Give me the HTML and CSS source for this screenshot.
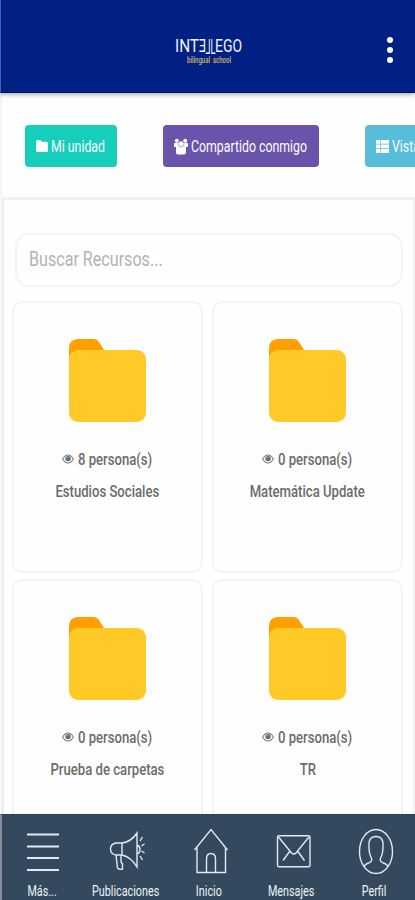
FILE: index.html
```html
<!DOCTYPE html>
<html lang="es">
<head>
<meta charset="utf-8">
<meta name="viewport" content="width=device-width">
<title>Intellego</title>
<link rel="stylesheet" href="styles.css">
</head>
<body>
<svg class="defs" width="0" height="0" aria-hidden="true">
  <symbol id="folder" viewBox="0 0 77 83">
    <path fill="#ffa000" d="M0 40V10Q0 0 9 0H25Q28 0 30 3L37 14V40Z"/>
    <rect y="11" width="77" height="72" rx="9" fill="#ffca28"/>
  </symbol>
  <symbol id="eye" viewBox="0 0 12 10">
    <path fill="none" stroke="#777" stroke-width="1.1" d="M.6 5Q3 1 6 1t5.400 4Q9 9 6 9T.6 5Z"/>
    <circle cx="6" cy="4.600" r="2.700" fill="#666"/>
    <path fill="none" stroke="#ddd" stroke-width=".8" d="M4.500 4.500Q4.600 3.200 6 3.100"/>
  </symbol>
</svg>
<div class="app">
  <header class="header">
    <svg class="logo" width="70" height="34" viewBox="0 0 70 34">
      <g class="logo-name">
        <text x="1" y="17" textLength="24" lengthAdjust="spacingAndGlyphs">INT</text>
        <text transform="translate(32 17) scale(-1 1)" textLength="7" lengthAdjust="spacingAndGlyphs">E</text>
        <text class="tall" transform="translate(36.500 19) scale(-1 1)" textLength="5" lengthAdjust="spacingAndGlyphs">L</text>
        <text class="tall" x="36.500" y="19" textLength="5" lengthAdjust="spacingAndGlyphs">L</text>
        <text x="41" y="17" textLength="27" lengthAdjust="spacingAndGlyphs">EGO</text>
      </g>
      <text class="logo-sub" x="13" y="28" textLength="44" lengthAdjust="spacingAndGlyphs" xml:space="preserve">bilingual  school</text>
    </svg>
    <div class="dots"><i></i><i></i><i></i></div>
  </header>
  <nav class="filters">
    <a class="btn mine">
      <svg width="12" height="12" viewBox="0 0 12 12"><path fill="#fff" d="M0 1.500Q0 0 1.500 0H4Q5.300 0 5.300 1.700H10.500Q12 1.700 12 3.200V10.500Q12 12 10.500 12H1.500Q0 12 0 10.500Z"/></svg>
      <span class="label">Mi unidad</span>
    </a>
    <a class="btn shared">
      <svg width="14" height="17" viewBox="0 0 14 17"><g fill="#fff"><circle cx="2.800" cy="2.800" r="2"/><circle cx="11.200" cy="2.800" r="2"/><path d="M0 9V6Q0 4.500 1.500 5H12.500Q14 4.500 14 6V9H0Z"/><rect x="2" y="8" width="10" height="8.500" rx="2"/></g><circle cx="7" cy="6" r="3" fill="#fff" stroke="#6a53ab" stroke-width=".5"/></svg>
      <span class="label">Compartido conmigo</span>
    </a>
    <a class="btn view">
      <svg width="13" height="13" viewBox="0 0 13 13"><path fill="#fff" d="M0 0H4V3.700H0ZM4.700 0H13V3.700H4.700ZM0 4.500H4V8.300H0ZM4.700 4.500H13V8.300H4.700ZM0 9.100H4V13H0ZM4.700 9.100H13V13H4.700Z"/></svg>
      <span class="label">Vista</span>
    </a>
  </nav>
  <main class="panel">
    <div class="search"><span>Buscar Recursos...</span></div>
    <section class="grid">
      <article class="card">
        <svg width="77" height="83"><use href="#folder"/></svg>
        <p class="count"><svg width="12" height="10"><use href="#eye"/></svg><span>8 persona(s)</span></p>
        <p class="name"><span>Estudios Sociales</span></p>
      </article>
      <article class="card">
        <svg width="77" height="83"><use href="#folder"/></svg>
        <p class="count"><svg width="12" height="10"><use href="#eye"/></svg><span>0 persona(s)</span></p>
        <p class="name"><span>Matemática Update</span></p>
      </article>
      <article class="card">
        <svg width="77" height="83"><use href="#folder"/></svg>
        <p class="count"><svg width="12" height="10"><use href="#eye"/></svg><span>0 persona(s)</span></p>
        <p class="name"><span>Prueba de carpetas</span></p>
      </article>
      <article class="card">
        <svg width="77" height="83"><use href="#folder"/></svg>
        <p class="count"><svg width="12" height="10"><use href="#eye"/></svg><span>0 persona(s)</span></p>
        <p class="name"><span>TR</span></p>
      </article>
    </section>
  </main>
  <footer class="tabs">
    <a><svg class="menu" width="36" height="48" viewBox="0 0 36 48"><path stroke-width="1.800" d="M2 8.500H34M2 20.500H34M2 32H34M2 44H34"/></svg><span>Más...</span></a>
    <a><svg width="36" height="48" viewBox="0 0 36 48"><path d="M13 17V29H7Q1.500 28 1.500 23T7 17H13Q22 16 28 7V41Q22 31 13 29M7 29L8.500 42Q10 44 13.500 43V38L12 36V29M28 19Q31 20 31 23.500T28 28M31 15L33.500 11M32.500 20L35.500 18M32.500 25L35.500 27M31 30L33.500 34"/></svg><span>Publicaciones</span></a>
    <a><svg class="home" width="36" height="48" viewBox="0 0 36 48"><path d="M1.500 24L18 3.500L34.500 24M4 21V46.500H32.500V21M13.500 46V33Q13.500 27.500 18 27.500T22.500 33V46"/></svg><span>Inicio</span></a>
    <a><svg class="mail" width="36" height="48" viewBox="0 0 36 48"><rect x="1.500" y="9.800" width="32.500" height="31" rx="1.500"/><path d="M2.500 11L15.500 27Q17.800 29 20 27L33 11M7 34.500L14 25M28.500 34.500L21.500 25"/></svg><span>Mensajes</span></a>
    <a><svg class="user" width="36" height="48" viewBox="0 0 36 48"><ellipse cx="18" cy="25.500" rx="16.500" ry="22"/><path d="M6 41Q7 38 10.500 37Q14.500 36 13.500 32Q11 28 11 21Q10 10.500 18 10.500T25 21Q25 28 22.500 32Q21.500 36 25.500 37Q29 38 30 41"/></svg><span>Perfil</span></a>
  </footer>
</div>
</body>
</html>
```

FILE: styles.css
```css
* { box-sizing: border-box; }

body {
  margin: 0;
  font-family: Roboto, "Liberation Sans", sans-serif;
  background: #fefefe;
}

.defs { display: block; }

.app {
  height: 900px;
  overflow: hidden;
  display: flex;
  flex-direction: column;
}

.header {
  flex: none;
  height: 93px;
  background: #002084;
  border-bottom: 1px solid #00145f;
  border-left: 1px solid #4a5fa6;
  box-shadow: 0 1px 5px rgba(0, 0, 0, .4);
  display: grid;
  grid-template-columns: 173px 1fr 50px;
  align-items: center;
  padding-top: 8px;
  z-index: 1;
}

.logo { grid-column: 2; margin-top: 4px; overflow: visible; }
.logo-name { fill: #f1f3fc; font-size: 17.5px; }
.logo-name .tall { font-size: 21px; }
.logo-sub { fill: #d3b765; font-size: 8.5px; font-weight: 500; }

.dots {
  display: grid;
  gap: 4px;
  justify-content: center;
}
.dots i {
  width: 6px;
  height: 6px;
  border-radius: 50%;
  background: #fff;
}

.filters {
  flex: none;
  height: 104px;
  border-left: 2px solid #f5f5f5;
  padding: 32px 0 0 23px;
  display: flex;
  gap: 46px;
}

.btn {
  flex: none;
  height: 42px;
  border-radius: 4px;
  padding-left: 11px;
  color: #fff;
  font-size: 16px;
  display: flex;
  align-items: center;
  gap: 3px;
  white-space: nowrap;
  overflow: hidden;
}
.btn svg { flex: none; }
.mine { width: 92px; background: #15cebb; }
.shared { width: 156px; background: #6a53ab; }
.view { width: 100px; background: #58bddb; }

.label {
  width: 0;
  transform: scaleX(.77);
  transform-origin: left;
}

.panel {
  flex: 1;
  min-height: 0;
  overflow: hidden;
  margin-left: 1px;
  border: 3px solid #f1f1f1;
  border-right-width: 2px;
  border-bottom: 0;
  padding: 33px 10px 0 8px;
}

.search {
  margin-left: 3px;
  height: 54px;
  border: 2px solid #f3f3f3;
  border-radius: 14px;
  padding: 0 0 2px 12px;
  display: flex;
  align-items: center;
  color: #b3b3b3;
  font-size: 21px;
}
.search span { transform: scaleX(.767); transform-origin: left; }

.grid {
  margin-top: 14px;
  display: grid;
  grid-template-columns: 1fr 1fr;
  grid-auto-rows: 272px;
  gap: 6px 9px;
}

.card {
  border: 2px solid #f3f3f3;
  border-radius: 10px;
  padding-top: 36px;
  display: flex;
  flex-direction: column;
  align-items: center;
  color: #6b6b6b;
  font-size: 16px;
  font-weight: 500;
}
.card p {
  margin: 0;
  height: 32px;
  width: 100%;
  display: flex;
  align-items: center;
  justify-content: center;
  white-space: nowrap;
}
.card .count { margin-top: 21px; justify-content: flex-start; padding-left: 48px; gap: 4px; }
.card .count span { transform: scaleX(.82); transform-origin: left; }
.card .name span { transform: scaleX(.82); }

.tabs {
  flex: none;
  height: 86px;
  background: #34495e;
  border-top: 1px solid #2b3d50;
  border-left: 2px solid #8290a0;
  display: grid;
  grid-template-columns: repeat(5, 83px);
  margin-right: -2px;
  color: #eef4f9;
  font-size: 14px;
}
.tabs a {
  display: flex;
  flex-direction: column;
  align-items: center;
  padding-top: 11px;
  margin-left: -2px;
}
.tabs svg {
  fill: none;
  stroke: #dfeaf4;
  stroke-width: 1.4;
  overflow: visible;
  margin-left: 2px;
}
.tabs .menu { margin-left: 0; }
.tabs .user { margin-left: 3px; }
.tabs .mail { margin-left: 4px; }
.tabs .home { margin-left: 4px; }
.tabs span { line-height: 16px; margin-top: 9px; transform: scaleX(.77); }
```
